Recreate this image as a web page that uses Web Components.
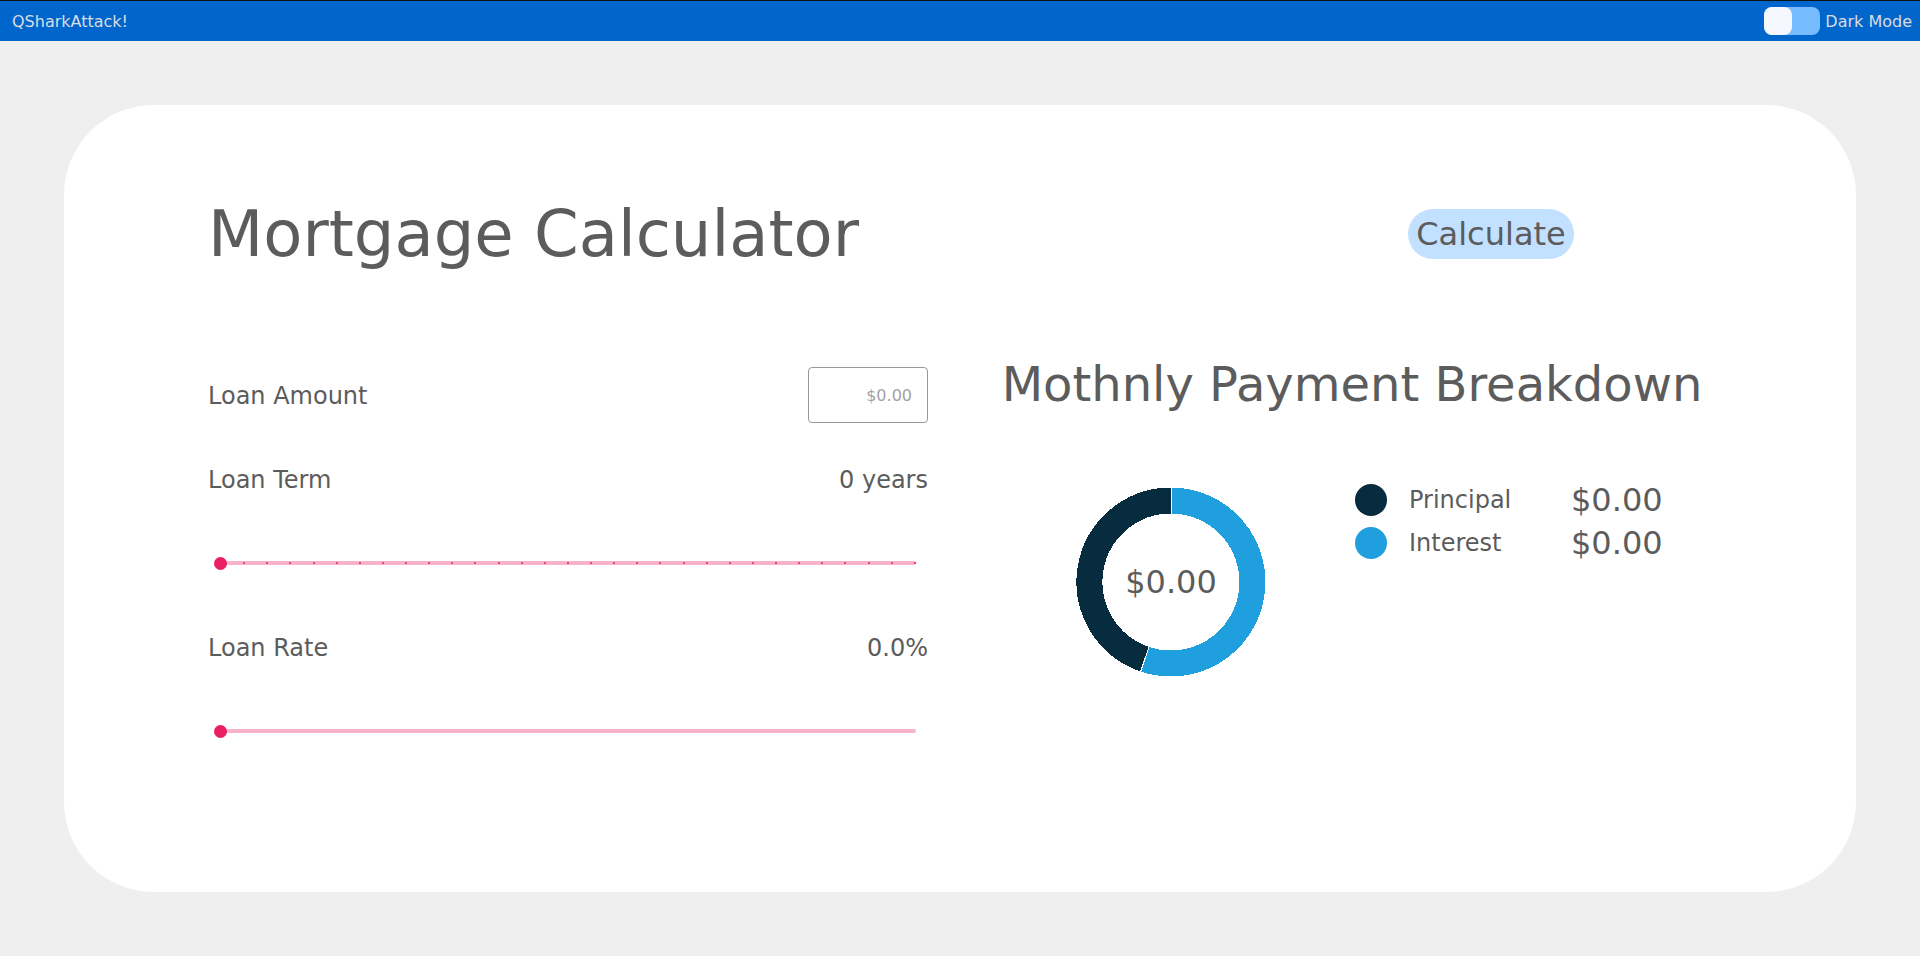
<!DOCTYPE html>
<html lang="en">
<head>
<meta charset="utf-8">
<title>Mortgage Calculator</title>
<style>
html, body { margin: 0; }
body { min-height: 100vh; background: #efefef; color: #5c5c5c; font: 16px "DejaVu Sans", sans-serif; }
</style>
</head>
<body>
<mortgage-app></mortgage-app>
<script>
function define(name, html, setup) {
  const template = document.createElement('template');
  template.innerHTML = html;
  customElements.define(name, class extends HTMLElement {
    constructor() {
      super();
      this.attachShadow({ mode: 'open' }).append(template.content.cloneNode(true));
    }
    connectedCallback() {
      if (setup) setup(this, this.shadowRoot);
    }
  });
}

define('dark-toggle', `
<style>
:host { display: block; }
label { display: flex; align-items: center; gap: 5px; }
input { appearance: none; margin: 0; width: 56px; height: 28px; border-radius: 8px; background: #77bbff; }
input::before { content: ""; display: block; width: 28px; height: 28px; border-radius: 8px; background: #f5f9ff; }
input:checked::before { margin-left: auto; }
</style>
<label><input type="checkbox" role="switch"><span><slot></slot></span></label>`);

define('top-bar', `
<style>
:host { display: block; }
header { display: flex; align-items: center; justify-content: space-between; height: 40px; padding: 0 8px 0 12px;
  border-top: 1px solid #111; background: #06c; color: #d9dce0; }
</style>
<header><span>QSharkAttack!</span><dark-toggle>Dark Mode</dark-toggle></header>`);

define('calc-button', `
<style>
:host { display: block; }
button { display: block; min-width: 166px; border: 0; border-radius: 25px; padding: 6px 8px; background: #c2e0ff; color: inherit; font: 32px "DejaVu Sans", sans-serif; }
</style>
<button type="button"><slot></slot></button>`);

define('money-field', `
<style>
:host { display: block; }
label { display: flex; align-items: center; justify-content: space-between; height: 84px; font-size: 24px; }
span { padding-top: 2px; }
input { box-sizing: border-box; width: 120px; height: 56px; padding: 0 15px; border: 1px solid #999; border-radius: 4px;
  background: #fff; color: inherit; font: 16px "DejaVu Sans", sans-serif; text-align: right; }
input::placeholder { color: #a2a2a2; opacity: 1; }
</style>
<label><span><slot></slot></span><input type="text" placeholder="$0.00"></label>`);

define('range-field', `
<style>
:host { display: block; font-size: 24px; }
.head, .slider { display: flex; align-items: center; justify-content: space-between; height: 84px; box-sizing: border-box; }
.head { padding-top: 2px; }
.slider { position: relative; padding: 0 12px; }
.rail { display: flex; flex: 1; align-items: center; justify-content: space-between; height: 4px; border-radius: 2px; background: #f8b2ca; }
.rail i { width: 2px; height: 2px; border-radius: 1px; background: #e91e63; }
input { position: absolute; left: 6px; right: 6px; width: calc(100% - 12px); height: 28px; margin: 0; appearance: none; background: none; }
input::-webkit-slider-thumb { appearance: none; width: 13px; height: 13px; border-radius: 50%; background: #e91e63; }
</style>
<div class="head"><label for="range"><slot></slot></label><output for="range"></output></div>
<div class="slider"><div class="rail"></div><input id="range" type="range" min="0" value="0"></div>`,
(host, root) => {
  const input = root.querySelector('input');
  const output = root.querySelector('output');
  const digits = Number(host.getAttribute('digits') || 0);
  input.max = host.getAttribute('max');
  input.step = digits ? '0.1' : '1';
  const show = () => { output.textContent = Number(input.value).toFixed(digits) + host.getAttribute('unit'); };
  input.addEventListener('input', show);
  show();
  if (host.hasAttribute('ticks')) {
    for (let n = 0; n <= Number(input.max); n++) root.querySelector('.rail').append(document.createElement('i'));
  }
});

define('payment-chart', `
<style>
:host { display: grid; place-items: center; }
svg, span { grid-area: 1 / 1; }
svg { display: block; }
span { font-size: 32px; }
</style>
<svg width="190" height="190" viewBox="-95 -95 190 190" shape-rendering="crispEdges" aria-hidden="true">
  <path fill="#209fdf" stroke="#fff" d="M0-95A95 95 0 1 1-30.5 90L-21.9 64.4A68 68 0 1 0 0-68Z"/>
  <path fill="#082c3f" stroke="#fff" d="M-30.5 90A95 95 0 0 1 0-95V-68A68 68 0 0 0-21.9 64.4Z"/>
</svg>
<span><slot></slot></span>`);

define('payment-legend', `
<style>
:host { display: block; }
table { border-collapse: collapse; }
th, td { box-sizing: border-box; height: 43px; padding: 0; font-weight: normal; text-align: left; }
th { width: 216px; font-size: 24px; }
td { padding-top: 2px; font-size: 32px; line-height: 37px; }
th span { display: flex; align-items: center; gap: 22px; }
th span::before { content: ""; width: 32px; height: 32px; border-radius: 50%; background: #082c3f; }
th .interest::before { background: #209fdf; }
</style>
<table>
  <tr><th scope="row"><span>Principal</span></th><td>$0.00</td></tr>
  <tr><th scope="row"><span class="interest">Interest</span></th><td>$0.00</td></tr>
</table>`);

define('mortgage-app', `
<style>
:host { display: flex; flex-direction: column; min-height: 100vh; }
main { flex: 1; margin: 64px; padding: 91px 144px; border-radius: 90px; background: #fff; box-sizing: border-box; }
.title { display: flex; align-items: center; justify-content: space-between; padding-right: 138px; margin-bottom: 81px; }
h1, h2 { margin: 0; font-weight: normal; }
h1 { font-size: 64px; line-height: 76px; }
h2 { font-size: 48px; line-height: 56px; text-align: center; white-space: nowrap; }
.columns { display: grid; grid-template-columns: 1fr 1fr; gap: 64px; }
.result { padding-top: 3px; }
.detail { display: grid; grid-template-columns: 1fr 1fr; align-items: start; padding-top: 66px; }
payment-chart { margin: 9px 2px 0 0; }
payment-legend { padding-left: 3px; }
</style>
<top-bar></top-bar>
<main>
  <div class="title"><h1>Mortgage Calculator</h1><calc-button>Calculate</calc-button></div>
  <div class="columns">
    <form>
      <money-field>Loan Amount</money-field>
      <range-field max="30" unit=" years" ticks>Loan Term</range-field>
      <range-field max="20" unit="%" digits="1">Loan Rate</range-field>
    </form>
    <section class="result">
      <h2>Mothnly Payment Breakdown</h2>
      <div class="detail"><payment-chart>$0.00</payment-chart><payment-legend></payment-legend></div>
    </section>
  </div>
</main>`);
</script>
</body>
</html>
